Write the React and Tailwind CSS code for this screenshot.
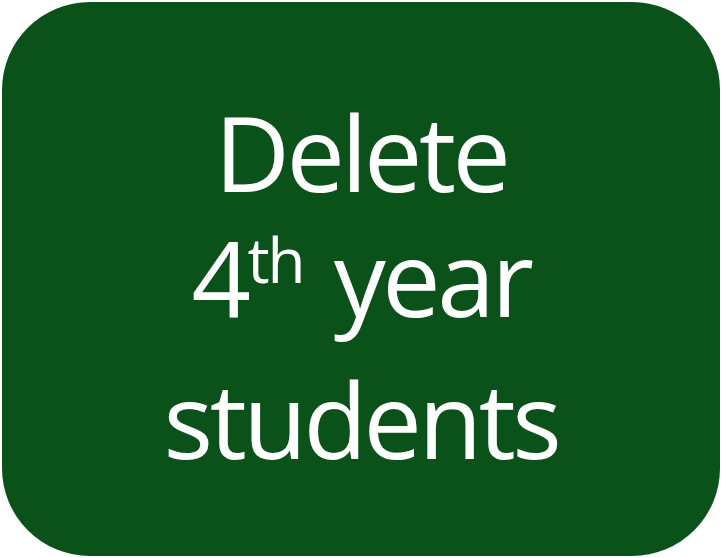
export default function App() {
  return (
    <div className="w-[722px] h-[558px] bg-white p-[2px]">
      <div className="w-full h-full rounded-[88px] bg-[#0a5219] flex flex-col items-center justify-center pt-[12px] text-white text-[104px] leading-[125px] font-['Open_Sans',sans-serif] font-normal tracking-[-3.5px]">
        <div>Delete</div>
        <div className="flex items-baseline">
          <span>4</span>
          <span className="text-[62px] relative top-[-34px] tracking-[-2px]">th</span>
          <span className="ml-[30px]">year</span>
        </div>
        <div>students</div>
      </div>
    </div>
  );
}
